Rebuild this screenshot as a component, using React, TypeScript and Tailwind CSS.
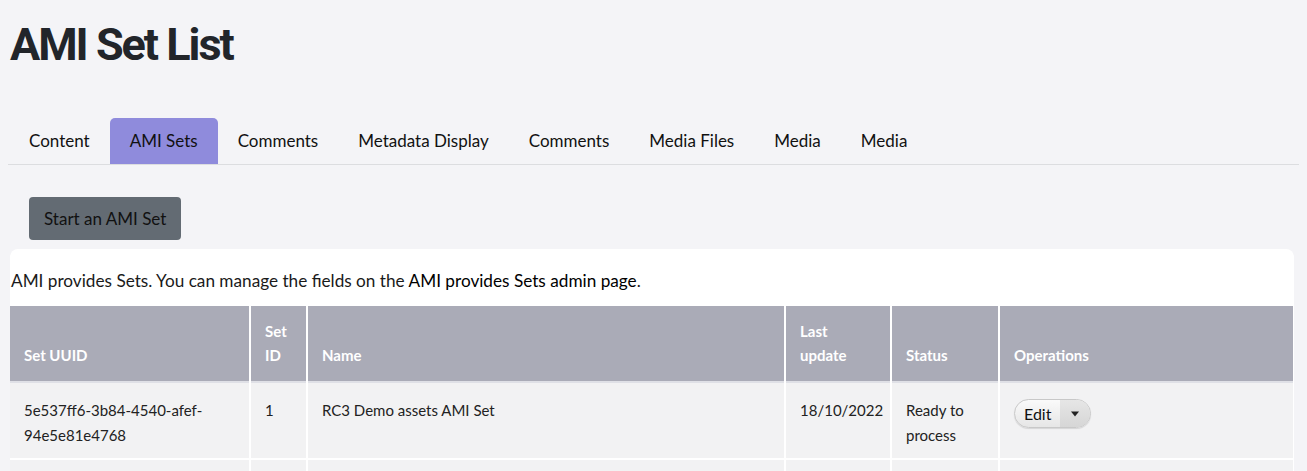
const tabs = [
  { label: "Content" },
  { label: "AMI Sets", active: true },
  { label: "Comments" },
  { label: "Metadata Display" },
  { label: "Comments" },
  { label: "Media Files" },
  { label: "Media" },
  { label: "Media" },
];

type Row = {
  uuid: string;
  id: string;
  name: string;
  updated: string;
  status: string;
};

const rows: Row[] = [
  {
    uuid: "5e537ff6-3b84-4540-afef-94e5e81e4768",
    id: "1",
    name: "RC3 Demo assets AMI Set",
    updated: "18/10/2022",
    status: "Ready to process",
  },
];

const th = "border-x-2 border-white first:border-l-0 last:border-r-0 px-[14px] pb-[14px] align-bottom text-left font-bold";
const td = "border-x-2 border-white first:border-l-0 last:border-r-0 px-[14px] pt-[15px] pb-[10px] align-top";

function EditButton() {
  return (
    <div className="inline-flex h-[29px] items-stretch overflow-hidden rounded-full border border-[#c8c8c8] bg-gradient-to-b from-[#fafafa] to-[#e6e6e6] text-[16px] text-[#111] shadow-[0_1px_1px_rgba(0,0,0,0.12)]">
      <span className="flex items-center pl-[9px] pr-[9px]">Edit</span>
      <span className="flex items-center bg-gradient-to-b from-[#e6e6e6] to-[#d6d6d6] px-[10px]">
        <svg width="10" height="6" viewBox="0 0 10 6">
          <path d="M1 0.5h8L5 5.5z" fill="#222" />
        </svg>
      </span>
    </div>
  );
}

export default function App() {
  return (
    <div className="min-h-[471px] bg-[#f4f4f7] font-['Lato','Open_Sans',sans-serif] text-[#1a1a1a]">
      <h1 className="pl-[10px] pt-[19px] font-['Roboto',sans-serif] text-[45px] font-bold leading-[52px] tracking-[-0.045em] text-[#22252a]">
        AMI Set List
      </h1>

      <ul className="mx-[8px] mt-[47px] flex h-[47px] border-b border-[#dcdde0] pl-[1px]">
        {tabs.map((t, i) => (
          <li
            key={i}
            className={
              "flex items-center rounded-t-[5px] px-[20px] text-[17px] " +
              (t.active ? "bg-[#8f8bdc] text-[#111]" : "text-[#111]")
            }
          >
            {t.label}
          </li>
        ))}
      </ul>

      <div className="px-[29px] pt-[32px]">
        <button className="h-[43px] rounded-[4px] bg-[#636b73] px-[15px] text-[17px] text-[#111]">
          Start an AMI Set
        </button>
      </div>

      <div className="mx-[10px] mr-[13px] mt-[9px] rounded-t-[8px] bg-white pt-[20px]">
        <p className="pl-[1px] text-[17.2px] leading-[24px] text-[#1a1a1a]">
          AMI provides Sets. You can manage the fields on the{" "}
          <a className="text-[#000]">AMI provides Sets admin page</a>.
        </p>

        <table className="mt-[13px] w-[1283px] table-fixed border-collapse text-[15px]">
          <colgroup>
            <col className="w-[240px]" />
            <col className="w-[57px]" />
            <col className="w-[478px]" />
            <col className="w-[106px]" />
            <col className="w-[108px]" />
            <col />
          </colgroup>
          <thead>
            <tr className="h-[76px] border-b-2 border-[#dfe0e6] bg-[#aaabb7] leading-[24px] text-white">
              <th className={th}>Set UUID</th>
              <th className={th}>
                Set
                <br />
                ID
              </th>
              <th className={th}>Name</th>
              <th className={th}>
                Last
                <br />
                update
              </th>
              <th className={th}>Status</th>
              <th className={th}>Operations</th>
            </tr>
          </thead>
          <tbody>
            {rows.map((r) => (
              <tr key={r.uuid} className="border-b-2 border-white bg-[#f2f2f3] leading-[25px] text-[#222]">
                <td className={td}>
                  5e537ff6-3b84-4540-afef-
                  <br />
                  94e5e81e4768
                </td>
                <td className={td}>{r.id}</td>
                <td className={td}>{r.name}</td>
                <td className={td}>{r.updated}</td>
                <td className={td}>
                  Ready to
                  <br />
                  process
                </td>
                <td className={td}>
                  <div className="pt-[1px]">
                    <EditButton />
                  </div>
                </td>
              </tr>
            ))}
            <tr className="h-[40px] bg-[#f2f2f3]">
              <td className={td}></td>
              <td className={td}></td>
              <td className={td}></td>
              <td className={td}></td>
              <td className={td}></td>
              <td className={td}></td>
            </tr>
          </tbody>
        </table>
      </div>
    </div>
  );
}
